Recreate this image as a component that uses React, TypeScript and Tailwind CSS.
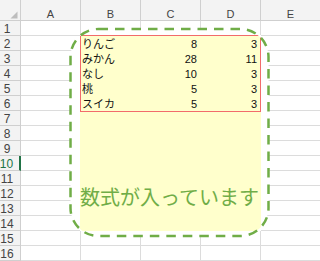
import { Fragment } from "react";

const COLS = ["A", "B", "C", "D", "E"];
const ROWS = Array.from({ length: 16 }, (_, i) => i + 1);
const FRUITS: [string, number, number][] = [
  ["りんご", 8, 3],
  ["みかん", 28, 11],
  ["なし", 10, 3],
  ["桃", 5, 3],
  ["スイカ", 5, 3],
];

// Rounded rectangle outline of the callout shape (stroke centre line)
const SX = 70.5;
const SY = 29;
const SW = 198;
const SH = 207;
const SR = 28;
const shapePath = `M${SX + SR},${SY} H${SX + SW - SR} A${SR},${SR} 0 0 1 ${SX + SW},${SY + SR} V${SY + SH - SR} A${SR},${SR} 0 0 1 ${SX + SW - SR},${SY + SH} H${SX + SR} A${SR},${SR} 0 0 1 ${SX},${SY + SH - SR} V${SY + SR} A${SR},${SR} 0 0 1 ${SX + SR},${SY} Z`;
// Filled range B2:D14 (incl. the borders it covers)
const fillRect = `M80,35 H261 V231 H80 Z`;

const font = {
  fontFamily: '"Liberation Sans", "Noto Sans CJK JP", Arial, sans-serif',
};

export default function App() {
  return (
    <div
      className="relative w-[320px] h-[261px] overflow-hidden bg-white text-[11px] text-[#111]"
      style={font}
    >
      <div className="grid grid-cols-[21px_60px_60px_60px_60px_60px] grid-rows-[21px_repeat(16,15px)]">
        {/* select-all corner */}
        <div className="relative bg-[#f3f3f3] border-r border-b border-[#cfcfcf]">
          <svg className="absolute left-0 top-0" width="20" height="20">
            <polygon points="17.5,11.5 17.5,18.5 10.5,18.5" fill="#bdbdbd" />
          </svg>
        </div>
        {COLS.map((c) => (
          <div
            key={c}
            className="flex items-end justify-center bg-[#f3f3f3] border-r border-b border-[#cfcfcf] leading-none text-[#444]"
          >
            {c}
          </div>
        ))}

        {ROWS.map((r) => (
          <Fragment key={r}>
            {r === 10 ? (
              <div className="flex justify-center pr-[6px] bg-[#f3f3f3] border-b border-[#cfcfcf] border-r-2 border-r-[#217346] leading-[16px] text-[12px] text-[#217346]">
                {r}
              </div>
            ) : (
              <div className="flex justify-center pr-[6px] bg-[#f3f3f3] border-r border-b border-[#cfcfcf] leading-[16px] text-[12px] text-[#444]">
                {r}
              </div>
            )}
            <div className="border-r border-b border-[#dcdcdc]" />
            {r === 1 || r >= 15 ? (
              <>
                <div className="border-r border-b border-[#dcdcdc]" />
                <div className="border-r border-b border-[#dcdcdc]" />
                <div className="border-r border-b border-[#dcdcdc]" />
              </>
            ) : null}
            <div className="border-r border-b border-[#dcdcdc]" />
          </Fragment>
        ))}

        {/* B2:D14 filled range with the bordered table */}
        <div className="col-[3/6] row-[3/16] -ml-px -mt-px bg-[#ffffcc]">
          <div className="grid h-[77px] grid-cols-[59px_60px_60px] grid-rows-[repeat(5,15px)] border border-[#f26b6b]">
            {FRUITS.map(([name, a, b]) => (
              <Fragment key={name}>
                <div className="pl-[1px] leading-[16px] whitespace-nowrap">{name}</div>
                <div className="pr-[3px] text-right leading-[16px]">{a}</div>
                <div className="pr-[3px] text-right leading-[16px]">{b}</div>
              </Fragment>
            ))}
          </div>
        </div>
      </div>

      {/* dashed rounded callout drawn over the sheet */}
      <svg
        className="pointer-events-none absolute left-0 top-0"
        width="320"
        height="261"
      >
        <path d={`${shapePath} ${fillRect}`} fill="#ffffff" fillRule="evenodd" />
        <path
          d={shapePath}
          fill="none"
          stroke="#70ad47"
          strokeWidth="2.5"
          strokeDasharray="9.5 7"
        />
      </svg>
      <div
        className="pointer-events-none absolute left-[70px] top-[187px] w-[199px] text-center text-[20px] leading-[20px] whitespace-nowrap text-[#70ad47]"
        style={{ fontFamily: '"Noto Sans CJK JP", sans-serif' }}
      >
        数式が入っています
      </div>
    </div>
  );
}
